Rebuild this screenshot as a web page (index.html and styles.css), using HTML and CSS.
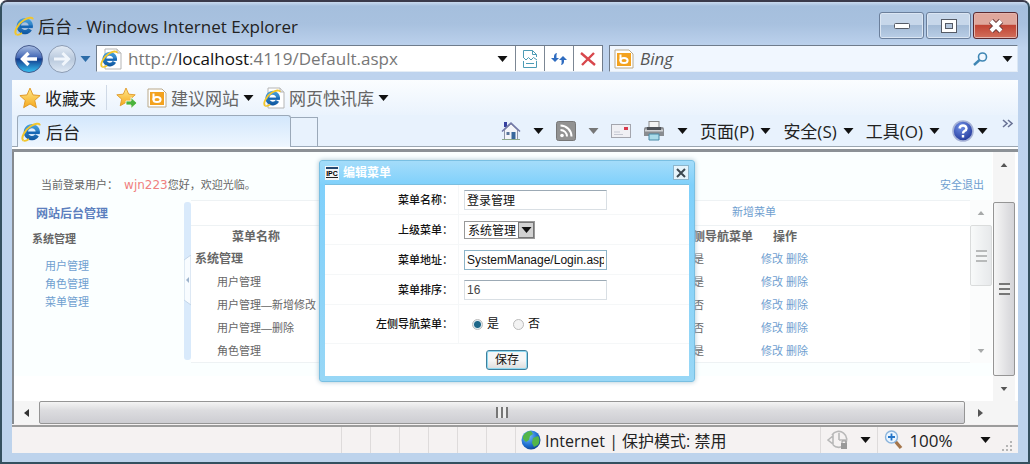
FILE: index.html
```
<!DOCTYPE html>
<html lang="zh-CN">
<head>
	<meta charset="utf-8">
	<title>后台</title>
	<link rel="stylesheet" href="styles.css">
</head>
<body>
<svg class="defs" width="0" height="0" aria-hidden="true">
	<defs>
		<linearGradient id="gBlue" gradientUnits="userSpaceOnUse" x1="0" y1="2" x2="0" y2="18">
			<stop offset="0" stop-color="#4aa5e2"/>
			<stop offset="1" stop-color="#0d559f"/>
		</linearGradient>
		<linearGradient id="gBack" x1="0" y1="0" x2="0" y2="1">
			<stop offset="0" stop-color="#a9bfe4"/>
			<stop offset=".45" stop-color="#4266b4"/>
			<stop offset=".5" stop-color="#123a8c"/>
			<stop offset="1" stop-color="#38c4f4"/>
		</linearGradient>
		<linearGradient id="gForward" x1="0" y1="0" x2="0" y2="1">
			<stop offset="0" stop-color="#e4ecf6"/>
			<stop offset=".5" stop-color="#b9c9dd"/>
			<stop offset="1" stop-color="#dfe9f5"/>
		</linearGradient>
		<linearGradient id="gStar" x1="0" y1="0" x2="0" y2="1">
			<stop offset="0" stop-color="#ffe98c"/>
			<stop offset="1" stop-color="#f5a81c"/>
		</linearGradient>
		<radialGradient id="gHelp" cx=".4" cy=".3" r=".8">
			<stop offset="0" stop-color="#6f8fe6"/>
			<stop offset="1" stop-color="#1b2f92"/>
		</radialGradient>
		<radialGradient id="gGlobe" cx=".35" cy=".3" r=".8">
			<stop offset="0" stop-color="#7fc4f8"/>
			<stop offset=".6" stop-color="#1f6fd0"/>
			<stop offset="1" stop-color="#0b3a86"/>
		</radialGradient>
	</defs>
	<symbol id="ie" viewBox="0 0 20 20">
		<path d="M16 13.2A6 6 0 1 1 16.8 10.600" fill="none" stroke="url(#gBlue)" stroke-width="4.200"/>
		<path d="M6 10.800H18.800" stroke="#1667b5" stroke-width="2.600"/>
		<path d="M2.500 18.600C-.8 16.400 4 7.600 10 4C14 1.400 18.600 .6 18.800 3.400" fill="none" stroke="#f2c62c" stroke-width="2"/>
		<path d="M2.500 18.600C4 19.400 6.400 18.200 8 17" fill="none" stroke="#f2c62c" stroke-width="1.700"/>
	</symbol>
	<symbol id="iepage" viewBox="0 0 22 22">
		<path d="M5 1H17L21 5V21H5Z" fill="#fff" stroke="#b5b5b5"/>
		<path d="M17 1V5H21" fill="#e3e3e3" stroke="#b5b5b5"/>
		<use href="#ie" x="0" y="2" width="18" height="18"/>
	</symbol>
	<symbol id="bing" viewBox="0 0 20 20">
		<path d="M1 1H15L19 5V19H1Z" fill="#fff" stroke="#b9a98a"/>
		<rect x="3" y="4" width="14" height="13" fill="#f3a21f"/>
		<path d="M6.500 5.500V12" stroke="#fff" stroke-width="2"/>
		<ellipse cx="10" cy="11.500" rx="3.600" ry="2.600" fill="none" stroke="#fff" stroke-width="2"/>
	</symbol>
	<symbol id="star" viewBox="0 0 20 20">
		<path d="M10 1L12.7 7.2L19.2 7.8L14.3 12.2L15.8 18.8L10 15.4L4.2 18.8L5.7 12.2L.8 7.8L7.3 7.2Z" fill="url(#gStar)" stroke="#e09a28" stroke-width=".9" stroke-linejoin="round"/>
	</symbol>
	<symbol id="down" viewBox="0 0 10 6">
		<path d="M0 0H10L5 6Z" fill="currentColor"/>
	</symbol>
	<symbol id="up" viewBox="0 0 10 6">
		<path d="M0 6H10L5 0Z" fill="currentColor"/>
	</symbol>
</svg>

<div class="window">
	<header class="titlebar">
		<svg class="icon20"><use href="#ie"/></svg>
		<h1>后台 - Windows Internet Explorer</h1>
		<div class="winbuttons">
			<button aria-label="最小化"><svg width="16" height="6"><rect x=".5" y=".5" width="15" height="5" rx="1" fill="#fff" stroke="#555b66"/></svg></button>
			<button aria-label="最大化"><svg width="16" height="14"><rect x=".5" y=".5" width="15" height="13" fill="#fff" stroke="#555b66"/><rect x="4.500" y="4.500" width="7" height="5" fill="#b4c6dc" stroke="#555b66"/></svg></button>
			<button class="close" aria-label="关闭"><svg width="18" height="14"><path d="M4 2L14 12M14 2L4 12" stroke="#6b3a3a" stroke-width="6"/><path d="M4 2L14 12M14 2L4 12" stroke="#fff" stroke-width="4"/></svg></button>
		</div>
	</header>

	<div class="addressrow">
		<div class="nav">
			<button aria-label="后退"><svg width="30" height="30" viewBox="0 0 30 30"><circle cx="15" cy="15" r="13.500" fill="url(#gBack)" stroke="#44598c"/><path d="M23 15H9M14.500 9L8.500 15L14.500 21" fill="none" stroke="#fff" stroke-width="3.400"/></svg></button>
			<button aria-label="前进"><svg width="30" height="30" viewBox="0 0 30 30"><circle cx="15" cy="15" r="13.500" fill="url(#gForward)" stroke="#8b9bb3"/><path d="M7 15H20M15.500 9L21.500 15L15.500 21" fill="none" stroke="#f1f6fc" stroke-width="3"/></svg></button>
			<button aria-label="最近的页面"><svg class="arrow blue"><use href="#down"/></svg></button>
		</div>
		<div class="address">
			<svg class="icon22"><use href="#iepage"/></svg>
			<div class="url" role="textbox" aria-label="地址">http://<b>localhost</b>:4119/Default.aspx</div>
			<button aria-label="显示地址列表"><svg class="arrow"><use href="#down"/></svg></button>
			<button class="cell" aria-label="兼容性视图"><svg width="16" height="20" viewBox="0 0 16 20" fill="none" stroke="#4d9bb5"><path d="M1.500 8V1.500H10.500L14.500 5.500V8M10.500 1.500V5.500H14.500M1.500 12V18.500H14.500V12"/><path d="M1 8L4 11L6.500 8.500L9 11L11.500 8.500L15 11M4 14.500H12"/></svg></button>
			<button class="cell" aria-label="刷新"><svg width="16" height="14" viewBox="0 0 16 14" fill="#2f6cc0"><path d="M6 1Q2.500 1.500 3 6H0L4 10L8 6H5.500Q5 3 6 1ZM10 13Q13.500 12.500 13 8H16L12 4L8 8H10.500Q11 11 10 13Z"/></svg></button>
			<button class="cell" aria-label="停止"><svg width="16" height="14" viewBox="0 0 16 14"><path d="M1 1L15 13M14 1L2 13" stroke="#d8474c" stroke-width="2.400"/></svg></button>
		</div>
		<div class="search">
			<svg class="icon20"><use href="#bing"/></svg>
			<input type="text" aria-label="搜索" placeholder="Bing">
			<button aria-label="搜索"><svg width="15" height="14" viewBox="0 0 15 14" fill="none" stroke="#3f86b4"><circle cx="9.500" cy="5" r="4" stroke-width="1.600"/><path d="M6.500 8L1 13" stroke-width="2.400"/></svg></button>
			<button aria-label="搜索选项"><svg class="arrow"><use href="#down"/></svg></button>
		</div>
	</div>

	<div class="frame">
		<div class="favorites">
			<button class="fav main"><svg class="icon22"><use href="#star"/></svg>收藏夹</button>
			<button class="fav" aria-label="添加到收藏夹栏"><svg width="22" height="22" viewBox="0 0 22 22"><use href="#star" width="20" height="20"/><path d="M10 14H15V10.500L21 16L15 21.500V18H10Z" fill="#4ab33c" stroke="#fff" stroke-width=".8"/></svg></button>
			<button class="fav"><svg class="icon20"><use href="#bing"/></svg>建议网站<svg class="arrow"><use href="#down"/></svg></button>
			<button class="fav"><svg class="icon22"><use href="#iepage"/></svg>网页快讯库<svg class="arrow"><use href="#down"/></svg></button>
		</div>
		<div class="tabrow">
			<button class="tab"><svg class="icon20"><use href="#ie"/></svg>后台</button>
			<button class="newtab" aria-label="新选项卡"></button>
			<div class="commands">
				<button aria-label="主页"><svg width="20" height="20" viewBox="0 0 20 20"><path d="M3 1H6V6H3Z" fill="#3540a0"/><path d="M3.500 9L10 3L16.500 9V18.500H3.500Z" fill="#f4f5f9" stroke="#8f95a8"/><path d="M1 10.500L10 2L19 10.500" fill="none" stroke="#7379a8" stroke-width="1.600"/><rect x="10.500" y="11" width="4" height="7.500" fill="#39689c"/><rect x="5.500" y="11" width="3" height="3" fill="#58749a"/><path d="M1 18.500H19" stroke="#8fa98c"/></svg><svg class="arrow"><use href="#down"/></svg></button>
				<button aria-label="源"><svg width="20" height="20" viewBox="0 0 20 20"><rect x=".5" y=".5" width="19" height="19" rx="2" fill="#929292" stroke="#777"/><circle cx="6" cy="14.500" r="1.800" fill="#fff"/><path d="M4.500 9A6.500 6.500 0 0 1 11 15.500M4.500 4.500A11 11 0 0 1 15.500 15.500" fill="none" stroke="#fff" stroke-width="2"/></svg><svg class="arrow grey"><use href="#down"/></svg></button>
				<button aria-label="阅读邮件"><svg width="20" height="14" viewBox="0 0 20 14"><rect x=".5" y=".5" width="19" height="13" fill="#f0f0f4" stroke="#a4a6ae"/><rect x="13" y="3" width="4" height="3" fill="#d8394c"/><path d="M3 8H9M3 10.500H12" stroke="#c5c8d2"/></svg></button>
				<button aria-label="打印"><svg width="22" height="20" viewBox="0 0 22 20"><rect x="6" y=".5" width="10" height="8" fill="#f4f4f4" stroke="#8b8b8b"/><path d="M1 8Q1 6 3 6H19Q21 6 21 8V15H1Z" fill="#8a8d91"/><path d="M2 9.500H20" stroke="#d0d2d5" stroke-width="2"/><rect x="4" y="6" width="14" height="3" fill="#4f5358"/><path d="M6 13H16V19H6Z" fill="#a9dbe9" stroke="#4989a6"/></svg><svg class="arrow"><use href="#down"/></svg></button>
				<button>页面(P)<svg class="arrow"><use href="#down"/></svg></button>
				<button>安全(S)<svg class="arrow"><use href="#down"/></svg></button>
				<button>工具(O)<svg class="arrow"><use href="#down"/></svg></button>
				<button class="help" aria-label="帮助"><svg width="22" height="22" viewBox="0 0 22 22"><circle cx="11" cy="11" r="10" fill="url(#gHelp)" stroke="#a6b2d6" stroke-width="1.600"/><path d="M7.500 8.500Q8 5.500 11 5.500T14.500 8.500Q14.500 10 12.500 11Q11 12 11 13.500M11 15V17.500" fill="none" stroke="#fff" stroke-width="2.400"/></svg><svg class="arrow"><use href="#down"/></svg></button>
				<button class="more" aria-label="更多"><svg width="12" height="9" viewBox="0 0 12 9"><path d="M1 1L5 4.500L1 8M6 1L10 4.500L6 8" fill="none" stroke="#6a7396" stroke-width="1.600"/></svg></button>
			</div>
		</div>

		<div class="viewport">
			<main class="page">
				<div class="welcome">
					<p>当前登录用户： <span class="user">wjn223</span>您好，欢迎光临。</p>
					<a href="#">安全退出</a>
				</div>
				<div class="columns">
					<nav class="sidebar">
						<h2>网站后台管理</h2>
						<h3>系统管理</h3>
						<ul>
							<li><a href="#">用户管理</a></li>
							<li><a href="#">角色管理</a></li>
							<li><a href="#">菜单管理</a></li>
						</ul>
					</nav>
					<div class="splitter">
						<svg width="8" height="52" viewBox="0 0 8 52"><path d="M0 5L7 0V50L0 45Z" fill="#f8fcff" stroke="#c3d5e8"/><path d="M5 22L2 25L5 28Z" fill="#9db3cc"/></svg>
					</div>
					<section class="list">
						<div class="listbar"><a href="#">新增菜单</a></div>
						<table>
							<thead>
								<tr><th class="name">菜单名称</th><th class="leftnav">左侧导航菜单</th><th class="ops">操作</th><th></th></tr>
							</thead>
							<tbody>
								<tr class="parent"><td>系统管理</td><td>是</td><td><a href="#">修改</a> <a href="#">删除</a></td><td></td></tr>
								<tr><td>用户管理</td><td>是</td><td><a href="#">修改</a> <a href="#">删除</a></td><td></td></tr>
								<tr><td>用户管理—新增修改</td><td>否</td><td><a href="#">修改</a> <a href="#">删除</a></td><td></td></tr>
								<tr><td>用户管理—删除</td><td>否</td><td><a href="#">修改</a> <a href="#">删除</a></td><td></td></tr>
								<tr><td>角色管理</td><td>是</td><td><a href="#">修改</a> <a href="#">删除</a></td><td></td></tr>
							</tbody>
						</table>
					</section>
					<div class="vscroll inner">
						<button aria-label="向上"><svg class="small"><use href="#up"/></svg></button>
						<div class="thumb"><i></i></div>
						<button aria-label="向下"><svg class="small"><use href="#down"/></svg></button>
					</div>
				</div>

				<form class="dialog" role="dialog" aria-labelledby="dialogTitle">
					<div class="dialoghead">
						<svg width="14" height="14" viewBox="0 0 14 14"><rect width="14" height="14" fill="#f4f6f7"/><rect x="1" y="1" width="12" height="2" fill="#25466e"/><text x="7" y="10" text-anchor="middle" class="logotext">IPC</text><rect x="1" y="11" width="12" height="1" fill="#222"/></svg>
						<h2 id="dialogTitle">编辑菜单</h2>
						<button type="button" aria-label="关闭"><svg width="10" height="10" viewBox="0 0 10 10"><path d="M1 1L9 9M9 1L1 9" stroke="#3c4850" stroke-width="2"/></svg></button>
					</div>
					<div class="dialogbody">
						<div class="row">
							<label for="menuName">菜单名称：</label>
							<div class="field"><input id="menuName" type="text" value="登录管理"></div>
						</div>
						<div class="row">
							<label for="parentMenu">上级菜单：</label>
							<div class="field">
								<div class="select">
									<select id="parentMenu"><option>系统管理</option></select>
									<span><svg class="arrow"><use href="#down"/></svg></span>
								</div>
							</div>
						</div>
						<div class="row">
							<label for="menuUrl">菜单地址：</label>
							<div class="field"><input id="menuUrl" class="active" type="text" value="SystemManage/Login.aspx"></div>
						</div>
						<div class="row">
							<label for="menuOrder">菜单排序：</label>
							<div class="field"><input id="menuOrder" class="order" type="text" value="16"></div>
						</div>
						<div class="row tall">
							<span class="label" id="leftNav">左侧导航菜单：</span>
							<div class="field radios" role="radiogroup" aria-labelledby="leftNav">
								<label><input type="radio" name="leftnav" checked>是</label>
								<label><input type="radio" name="leftnav">否</label>
							</div>
						</div>
						<div class="save"><button type="button">保存</button></div>
					</div>
				</form>
			</main>
			<div class="vscroll outer">
				<button aria-label="向上"><svg class="small"><use href="#up"/></svg></button>
				<div class="thumb"><i></i></div>
				<button aria-label="向下"><svg class="small"><use href="#down"/></svg></button>
			</div>
		</div>
		<div class="hscroll">
			<button aria-label="向左"><svg width="5" height="8"><path d="M5 0V8L0 4Z" fill="#333"/></svg></button>
			<div class="thumb"><i></i></div>
			<button aria-label="向右"><svg width="5" height="8"><path d="M0 0V8L5 4Z" fill="#555"/></svg></button>
		</div>

		<footer class="status">
			<div class="panes"><i></i><i></i><i></i><i></i><i></i><i></i></div>
			<div class="zone">
				<svg width="20" height="20" viewBox="0 0 20 20"><circle cx="10" cy="10" r="9.500" fill="url(#gGlobe)"/><path d="M2 6Q5 1 10 1L12 4L9 6L8 10L5 12L2 9ZM12 8L17 6Q20 10 17 15L13 17L11 13Z" fill="#53b548"/></svg>
				<span>Internet | 保护模式: 禁用</span>
			</div>
			<button class="protect" aria-label="安全"><svg width="22" height="20" viewBox="0 0 22 20"><path d="M5 5A8 8 0 1 1 6 15M12 10V3M12 10H19M1 10L6 6V14Z" fill="none" stroke="#b8b8b8" stroke-width="1.600"/><rect x="14" y="13" width="6" height="6" fill="#999"/><path d="M15 13V11H19V13" fill="none" stroke="#999"/></svg><svg class="arrow"><use href="#down"/></svg></button>
			<button class="zoom"><svg width="20" height="20" viewBox="0 0 20 20"><path d="M11 11L17 18" stroke="#a5754a" stroke-width="3.400"/><circle cx="7.500" cy="7" r="6" fill="#eaf5ff" stroke="#8bb4dc" stroke-width="1.400"/><path d="M7.500 3.500V10.500M4 7H11" stroke="#2475c8" stroke-width="1.800"/></svg><span>100%</span><svg class="arrow"><use href="#down"/></svg></button>
			<svg class="grip" width="11" height="11" viewBox="0 0 11 11" fill="#b5b5b5"><path d="M8 0H10V2H8ZM8 4H10V6H8ZM8 8H10V10H8ZM4 4H6V6H4ZM4 8H6V10H4ZM0 8H2V10H0Z"/></svg>
		</footer>
	</div>
</div>
</body>
</html>
```

FILE: styles.css
```
* {
	box-sizing: border-box;
}

body {
	margin: 0;
	background: #fff;
	font-family: "Open Sans", "Noto Sans CJK SC", sans-serif;
	font-size: 17px;
	color: #222;
}

h1, h2, h3, p, ul {
	margin: 0;
	padding: 0;
	font-weight: normal;
}

button {
	display: flex;
	align-items: center;
	justify-content: center;
	padding: 0;
	border: 0;
	background: none;
	font: inherit;
	color: inherit;
	white-space: nowrap;
}

a {
	color: #6fa0d0;
	text-decoration: none;
}

svg {
	flex: none;
}

.defs {
	position: absolute;
}

.icon20 {
	width: 20px;
	height: 20px;
}

.icon22 {
	width: 22px;
	height: 22px;
}

.arrow {
	width: 11px;
	height: 6px;
	color: #111;
}

.arrow.blue {
	color: #2c6ca8;
}

.arrow.grey {
	color: #777;
}

.small {
	width: 8px;
	height: 4px;
	color: #555;
}

/* window */
.window {
	display: flex;
	flex-direction: column;
	min-height: 100vh;
	border: 2px solid #34505f;
	border-top-color: #3a3a4a;
	border-radius: 7px 7px 0 0;
	padding: 0 10px 9px;
	background: linear-gradient(#c9daee 0, #a5bfdd 4px, #a8c1df 22px, #bed3ee 46px, #bdd3ec 100%);
}

.titlebar {
	display: flex;
	align-items: center;
	height: 43px;
	padding: 4px 0 0 2px;
	gap: 4px;
}

.titlebar h1 {
	flex: 1;
	font-size: 17px;
}

.winbuttons {
	display: flex;
	gap: 2px;
}

.winbuttons button {
	width: 45px;
	height: 27px;
	border: 1px solid #6b7f9b;
	border-radius: 3px;
	background: linear-gradient(#c7d7ea 50%, #a4bbd6 50%, #b9cee6);
	box-shadow: inset 0 0 0 1px #dbe6f3;
}

.winbuttons .close {
	border-color: #5b2a30;
	background: linear-gradient(#dfa79c 45%, #c04434 50%, #d2705c);
	box-shadow: inset 0 0 0 1px #e4b5ad;
}

/* address row */
.addressrow {
	display: flex;
	height: 35px;
	padding-bottom: 8px;
}

.nav {
	display: flex;
	align-items: center;
	width: 84px;
	gap: 3px;
	padding-left: 2px;
}

.address {
	display: flex;
	align-items: center;
	flex: 511;
	padding-left: 3px;
	border: 1px solid #6f7c8c;
	border-bottom-color: #e5edf6;
	background: #fff;
}

.url {
	flex: 1;
	min-width: 0;
	padding-left: 6px;
	overflow: hidden;
	white-space: nowrap;
	color: #777;
}

.url b {
	font-weight: normal;
	color: #111;
}

.address .arrow {
	margin-right: 7px;
}

.address .cell {
	width: 29px;
	height: 100%;
	border-left: 1px solid #7c8794;
}

.search {
	display: flex;
	align-items: center;
	flex: 406;
	margin-left: 6px;
	padding: 0 4px 0 4px;
	gap: 14px;
	border: 1px solid #6f7c8c;
	border-right-color: #dbe7f4;
	border-bottom-color: #e5edf6;
	background: #f1f7ff;
}

.search input {
	flex: 1;
	min-width: 0;
	margin-left: -8px;
	padding: 0;
	border: 0;
	background: none;
	font: italic 17px "Open Sans", sans-serif;
}

.search input::placeholder {
	color: #555;
}

/* favorites and tabs */
.frame {
	display: flex;
	flex-direction: column;
	flex: 1;
	background: #f5f2f2;
}

.favorites {
	display: flex;
	align-items: center;
	height: 35px;
	padding-left: 7px;
	gap: 9px;
	background: linear-gradient(#fbfdff, #eaf3fd);
}

.fav {
	gap: 4px;
	color: #666;
}

.fav.main {
	padding-right: 10px;
	border-right: 1px solid #cfd9e6;
	color: #222;
}

.tabrow {
	display: flex;
	height: 37px;
	border-bottom: 3px solid #8c9196;
	background: linear-gradient(#e8f2fd 31px, #9ba6b1 31px, #9ba6b1 32px, #fff 32px);
}

.tab {
	justify-content: flex-start;
	width: 274px;
	height: 32px;
	margin-left: 5px;
	padding-left: 3px;
	gap: 5px;
	border: 1px solid #9ba9b9;
	border-bottom: 0;
	border-radius: 3px 3px 0 0;
	background: linear-gradient(#d3e7fc, #eff7ff);
}

.newtab {
	width: 27px;
	height: 30px;
	margin-top: 2px;
	border: 1px solid #9ba9b9;
	border-left: 0;
}

.commands {
	display: flex;
	align-items: center;
	justify-content: flex-end;
	flex: 1;
	height: 31px;
	padding-right: 4px;
	gap: 12px;
}

.commands button {
	gap: 6px;
}

.commands button[aria-label] {
	gap: 12px;
}

.commands .help[aria-label] {
	gap: 3px;
}

.commands .more {
	margin: 0 0 14px 2px;
}

/* page area */
.viewport {
	display: flex;
	flex: 1;
	border-left: 2px solid #868b90;
	background: #fff;
}

.page {
	position: relative;
	flex: 1;
	background: linear-gradient(#fbffff 224px, #fff 224px);
	font-family: "Liberation Sans", "Noto Sans CJK SC", sans-serif;
	font-size: 11px;
	line-height: 16px;
	color: #666;
}

.welcome {
	display: flex;
	justify-content: space-between;
	height: 48px;
	padding: 25px 8px 0 27px;
}

.user {
	margin-left: 3px;
	font-family: "DejaVu Sans", sans-serif;
	font-size: 12px;
	color: #f08080;
}

.columns {
	display: flex;
	height: 163px;
}

.sidebar {
	width: 170px;
	padding: 6px 0 0 18px;
}

.sidebar h2 {
	padding-left: 4px;
	font-size: 12px;
	font-weight: bold;
	color: #5c7fbe;
}

.sidebar h3 {
	margin-top: 9px;
	font-size: 11px;
	font-weight: bold;
}

.sidebar ul {
	margin-top: 10px;
	padding-left: 13px;
	list-style: none;
	line-height: 18px;
}

.splitter {
	display: flex;
	align-items: center;
	width: 7px;
	height: 158px;
	margin-top: 2px;
	border-radius: 3px;
	background: #d9eafb;
}

.list {
	flex: 1;
	border-top: 1px solid #eef2f4;
	border-bottom: 1px solid #eef2f4;
	background: #fff;
}

.listbar {
	height: 25px;
	padding: 3px 194px 0 0;
	border-bottom: 1px solid #eef2f4;
	text-align: right;
}

table {
	width: 100%;
	border-collapse: collapse;
	table-layout: fixed;
}

th, td {
	height: 23px;
	padding: 0;
	text-align: left;
}

th {
	height: 21px;
	font-size: 12px;
}

th.name {
	padding-left: 41px;
}

th.leftnav {
	width: 80px;
}

th.ops {
	width: 56px;
	padding-left: 12px;
}

th:last-child {
	width: 153px;
}

td:first-child {
	padding-left: 26px;
}

td:nth-child(2) {
	padding-left: 12px;
}

.parent td:first-child {
	padding-left: 4px;
	font-size: 12px;
	font-weight: bold;
}

/* scrollbars */
.vscroll {
	display: flex;
	flex-direction: column;
	width: 22px;
	background: #f5f5f5;
}

.vscroll .thumb {
	display: flex;
	align-items: center;
	justify-content: center;
	border: 1px solid #959595;
	border-radius: 2px;
	background: linear-gradient(90deg, #f6f6f6, #d4d4d8);
}

.vscroll .thumb i {
	width: 11px;
	height: 12px;
	background: repeating-linear-gradient(#777 0, #777 2px, #eee 2px, #eee 5px);
}

.vscroll button {
	height: 25px;
}

.inner {
	background: #fbfbfb;
	opacity: .5;
}

.inner .thumb {
	height: 61px;
	border-color: #bbb;
}

.inner button:last-child {
	margin-top: auto;
}

.outer {
	margin: 0 3px 0 1px;
}

.outer .thumb {
	flex: 1;
	margin-top: 25px;
}

.hscroll {
	display: flex;
	height: 23px;
	border-left: 2px solid #868b90;
	background: #f5f5f5;
}

.hscroll button {
	width: 25px;
}

.hscroll button:last-child {
	width: 31px;
	margin-right: 22px;
}

.hscroll .thumb {
	display: flex;
	align-items: center;
	justify-content: center;
	flex: 1;
	border: 1px solid #959595;
	border-radius: 2px;
	background: linear-gradient(#f4f4f4, #dcdcdf 40%, #cdcdd2);
}

.hscroll .thumb i {
	width: 12px;
	height: 11px;
	background: repeating-linear-gradient(90deg, #777 0, #777 2px, #eee 2px, #eee 5px);
}

/* edit dialog, lies over the page */
.dialog {
	position: absolute;
	top: 8px;
	left: 8px;
	right: 0;
	width: 376px;
	margin: 0 auto;
	padding: 0 5px 5px;
	border: 1px solid #79bfe2;
	border-radius: 3px;
	background: linear-gradient(#a4dcfa, #7fd0fb 24px, #98d7f6);
	box-shadow: 0 0 5px #a9c3d0;
	color: #111;
}

.dialoghead {
	display: flex;
	align-items: center;
	height: 23px;
	gap: 4px;
}

.dialoghead h2 {
	flex: 1;
	font-size: 12px;
	font-weight: bold;
	color: #fff;
}

.dialoghead button {
	width: 16px;
	height: 15px;
	border: 1px solid #8cb5cb;
	background: #e6f4fb;
}

.logotext {
	font: bold 7px "Liberation Sans", sans-serif;
}

.dialogbody {
	border-top: 1px solid #7bbfe0;
	background: #fff;
}

.row {
	display: flex;
	align-items: center;
	height: 30px;
	border-bottom: 1px solid #f5f7f8;
}

.row.tall {
	height: 39px;
}

.row > label, .row > .label {
	width: 128px;
	text-align: right;
	font-size: 11px;
	font-weight: 500;
}

.field {
	display: flex;
	align-items: center;
	flex: 1;
	height: 100%;
	margin-left: 5px;
	padding-left: 5px;
	border-left: 1px solid #f5f7f8;
}

.field input[type="text"] {
	width: 143px;
	height: 20px;
	padding: 0 2px;
	border: 1px solid #d9dfe4;
	border-top-color: #9caab5;
	background: #fff;
	font: 12px "Liberation Sans", "Noto Sans CJK SC", sans-serif;
	color: #111;
}

.field input[type="text"].active {
	border-color: #8db4c8;
}

.field input[type="text"].order {
	color: #444;
}

.select {
	position: relative;
	height: 18px;
}

.select select {
	width: 71px;
	height: 18px;
	padding: 0 18px 0 3px;
	border: 1px solid #999;
	border-radius: 0;
	background: #fff;
	appearance: none;
	font: 12px "Noto Sans CJK SC", sans-serif;
	line-height: 16px;
	color: #111;
}

.select span {
	position: absolute;
	top: 1px;
	right: 1px;
	display: flex;
	align-items: center;
	justify-content: center;
	width: 16px;
	height: 16px;
	border: 1px solid #777;
	background: #d2d2d2;
	pointer-events: none;
}

.radios {
	padding-left: 13px;
	gap: 14px;
}

.radios label {
	display: flex;
	align-items: center;
	gap: 4px;
	font-size: 12px;
}

.radios input {
	width: 11px;
	height: 11px;
	margin: 0;
	border: 1px solid #bbb;
	border-radius: 50%;
	background: #f3f3f3;
	appearance: none;
}

.radios input:checked {
	background: radial-gradient(circle, #1d6688 3px, #dbe9ef 4px);
}

.save {
	display: flex;
	justify-content: center;
	padding: 6px;
}

.save button {
	width: 42px;
	height: 20px;
	border: 1px solid #3f7f9c;
	border-radius: 3px;
	background: linear-gradient(#f6f6f6 50%, #dcdcdc);
	box-shadow: inset 0 0 0 1px #8fd8f0;
	font-size: 12px;
}

/* status bar */
.status {
	display: flex;
	align-items: center;
	height: 28px;
	margin-top: 1px;
	border-top: 2px solid #9c9c9c;
	background: #f5f2f2;
	font-size: 16px;
}

.panes {
	display: flex;
	width: 503px;
	height: 100%;
	justify-content: flex-end;
}

.panes i {
	width: 29px;
	border-left: 1px solid #dedbdb;
}

.zone {
	display: flex;
	align-items: center;
	flex: 1;
	height: 100%;
	padding-left: 5px;
	gap: 4px;
	border-left: 1px solid #dedbdb;
	white-space: nowrap;
}

.protect, .zoom {
	height: 100%;
	border-left: 1px solid #dedbdb;
}

.protect {
	width: 57px;
	gap: 11px;
}

.zoom {
	width: 120px;
	gap: 5px;
	font-size: 17px;
}

.zoom .arrow {
	margin-left: 22px;
}

.grip {
	align-self: flex-end;
	margin: 0 5px 1px;
}
```
